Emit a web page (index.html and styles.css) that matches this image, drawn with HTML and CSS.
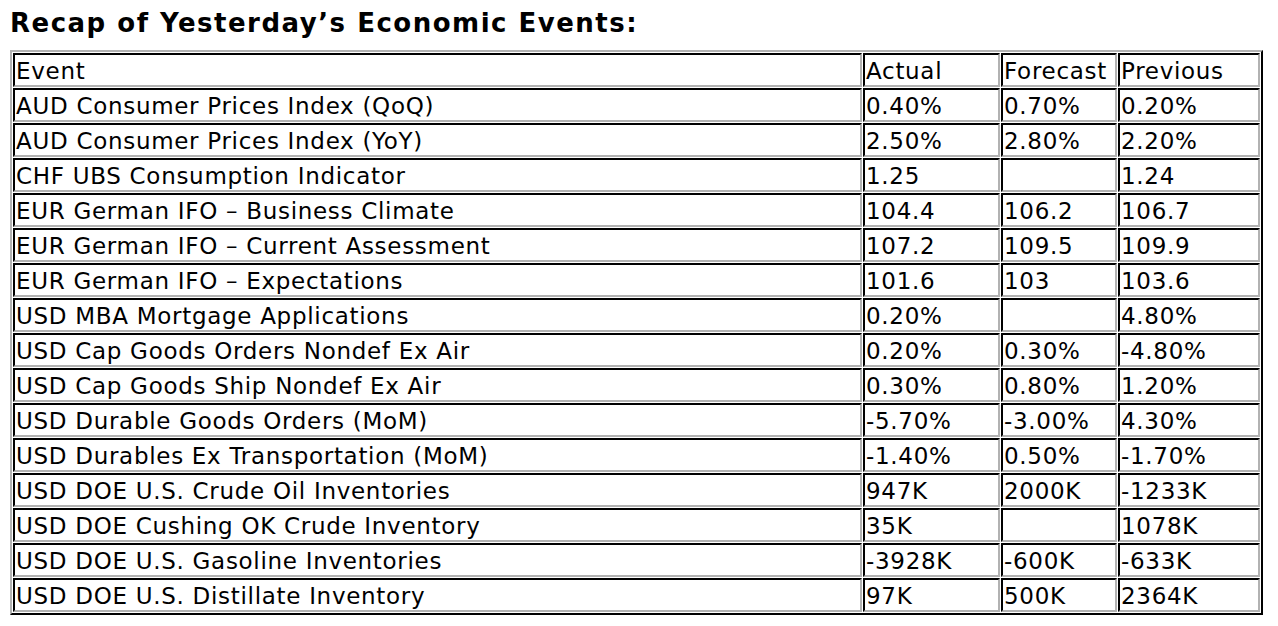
FILE: index.html
```html
<!DOCTYPE html>
<html>
<head>
<meta charset="utf-8">
<link rel="stylesheet" href="styles.css">
</head>
<body>
<div class="page">
<h1 class="title">Recap of Yesterday’s Economic Events:</h1>
<table class="events">
<tr><td class="c-event">Event</td><td class="c-actual">Actual</td><td class="c-forecast">Forecast</td><td class="c-previous">Previous</td></tr>
<tr><td>AUD Consumer Prices Index (QoQ)</td><td>0.40%</td><td>0.70%</td><td>0.20%</td></tr>
<tr><td>AUD Consumer Prices Index (YoY)</td><td>2.50%</td><td>2.80%</td><td>2.20%</td></tr>
<tr><td>CHF UBS Consumption Indicator</td><td>1.25</td><td></td><td>1.24</td></tr>
<tr><td>EUR German IFO – Business Climate</td><td>104.4</td><td>106.2</td><td>106.7</td></tr>
<tr><td>EUR German IFO – Current Assessment</td><td>107.2</td><td>109.5</td><td>109.9</td></tr>
<tr><td>EUR German IFO – Expectations</td><td>101.6</td><td>103</td><td>103.6</td></tr>
<tr><td>USD MBA Mortgage Applications</td><td>0.20%</td><td></td><td>4.80%</td></tr>
<tr><td>USD Cap Goods Orders Nondef Ex Air</td><td>0.20%</td><td>0.30%</td><td>-4.80%</td></tr>
<tr><td>USD Cap Goods Ship Nondef Ex Air</td><td>0.30%</td><td>0.80%</td><td>1.20%</td></tr>
<tr><td>USD Durable Goods Orders (MoM)</td><td>-5.70%</td><td>-3.00%</td><td>4.30%</td></tr>
<tr><td>USD Durables Ex Transportation (MoM)</td><td>-1.40%</td><td>0.50%</td><td>-1.70%</td></tr>
<tr><td>USD DOE U.S. Crude Oil Inventories</td><td>947K</td><td>2000K</td><td>-1233K</td></tr>
<tr><td>USD DOE Cushing OK Crude Inventory</td><td>35K</td><td></td><td>1078K</td></tr>
<tr><td>USD DOE U.S. Gasoline Inventories</td><td>-3928K</td><td>-600K</td><td>-633K</td></tr>
<tr><td>USD DOE U.S. Distillate Inventory</td><td>97K</td><td>500K</td><td>2364K</td></tr>
</table>
</div>
</body>
</html>
```
FILE: styles.css
```css
html, body {
  margin: 0;
  padding: 0;
  background: #ffffff;
}
.page {
  padding: 8px 10px 0 10px;
  font-family: "DejaVu Sans", Verdana, sans-serif;
  color: #000000;
}
.title {
  margin: 0 0 12px 0;
  font-size: 26px;
  line-height: 30px;
  font-weight: bold;
  letter-spacing: 1.5px;
}
.events {
  width: 1253px;
  table-layout: fixed;
  border-collapse: separate;
  border-spacing: 1px;
  border-style: solid;
  border-width: 2px;
  border-color: #b2b2b2 #000000 #000000 #b2b2b2;
  font-size: 23px;
  line-height: 28px;
  letter-spacing: 0.7px;
}
.events td {
  box-sizing: border-box;
  height: 34px;
  padding: 2px 1px 0 1px;
  border-style: solid;
  border-width: 2px;
  border-color: #000000 #b2b2b2 #b2b2b2 #000000;
  white-space: nowrap;
  vertical-align: middle;
  overflow: hidden;
}
.c-event { width: 849px; }
.c-actual { width: 137px; }
.c-forecast { width: 116px; }
.c-previous { width: 142px; }
```
